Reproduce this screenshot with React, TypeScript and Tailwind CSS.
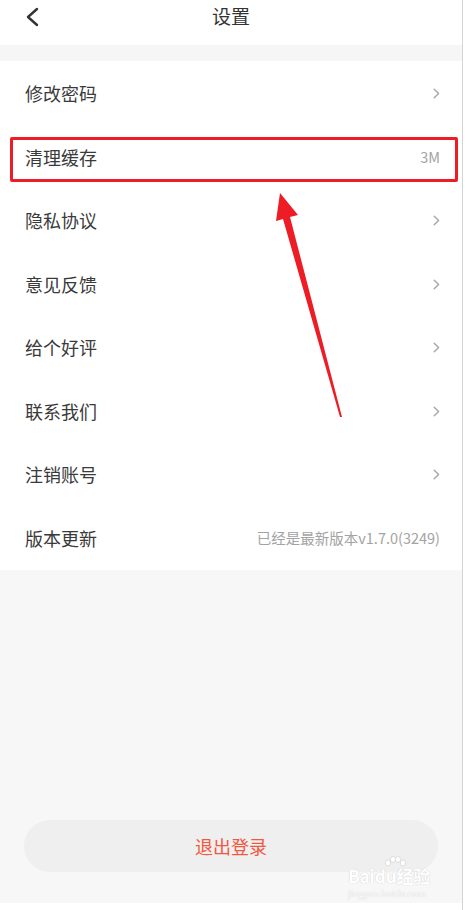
import React from 'react';

const rows: { label: string; value?: string }[] = [
  { label: '修改密码' },
  { label: '清理缓存', value: '3M' },
  { label: '隐私协议' },
  { label: '意见反馈' },
  { label: '给个好评' },
  { label: '联系我们' },
  { label: '注销账号' },
  { label: '版本更新', value: '已经是最新版本v1.7.0(3249)' },
];

const Chevron = () => (
  <svg width="7" height="11" viewBox="0 0 7 11" fill="none">
    <path d="M1.2 1.2 L5.6 5.5 L1.2 9.8" stroke="#a6a6a6" strokeWidth="1.4" strokeLinecap="round" strokeLinejoin="round" />
  </svg>
);

export default function App() {
  return (
    <div className="relative flex h-[910px] w-[465px] bg-white font-['Noto_Sans_CJK_SC','Noto_Sans',sans-serif]">
      <div className="flex w-[463px] flex-col border-r border-[#d4d4d4]">
        {/* Header */}
        <div className="relative flex h-[45px] items-center justify-center bg-white">
          <svg className="absolute left-[25px] top-[7px]" width="14" height="20" viewBox="0 0 14 20" fill="none">
            <path d="M12 2 L3 10 L12 18" stroke="#333" strokeWidth="2.4" strokeLinecap="round" strokeLinejoin="round" />
          </svg>
          <span className="-mt-[13px] text-[19px] text-[#333]">设置</span>
        </div>
        <div className="h-[16px] bg-[#f6f6f6]" />

        {/* List */}
        <div className="flex flex-col bg-white pt-[1px]">
          {rows.map((row) => (
            <div key={row.label} className="flex h-[63.5px] items-center justify-between pl-[25px] pr-[22px]">
              <span className="text-[18px] text-[#3a3a3a]">{row.label}</span>
              {row.value ? (
                <span className="text-[14.5px] text-[#a3a3a3]">{row.value}</span>
              ) : (
                <Chevron />
              )}
            </div>
          ))}
        </div>

        {/* Bottom */}
        <div className="flex flex-1 flex-col bg-[#f7f7f7] px-[24px] pt-[250px]">
          <button className="flex h-[52px] items-center justify-center rounded-full bg-[#efefef] text-[18px] text-[#f2573f]">
            退出登录
          </button>
        </div>
        <div className="h-[7px] bg-white" />
      </div>

      {/* Annotation: red box */}
      <div className="absolute left-[10px] top-[137px] h-[45px] w-[448px] rounded-[2px] border-[3px] border-[#ee1c25]" />

      {/* Annotation: arrow */}
      <svg className="absolute left-0 top-0" width="465" height="910" viewBox="0 0 465 910">
        <polygon points="280,193 298,215 290,217 342,417 340,417 283,219 276,221" fill="#ee1c25" />
      </svg>

      {/* Watermark */}
      <svg className="absolute left-[383px] top-[856px]" width="24" height="16" viewBox="0 0 24 16">
        <g fill="#ffffff" stroke="#d6d6d6" strokeWidth="0.8">
          <ellipse cx="5" cy="7" rx="2.6" ry="3" />
          <ellipse cx="10" cy="3.5" rx="2.6" ry="3" />
          <ellipse cx="15" cy="3.5" rx="2.6" ry="3" />
          <ellipse cx="20" cy="7" rx="2.6" ry="3" />
        </g>
      </svg>
      <span className="absolute left-[348px] top-[866px] text-[17px] font-bold leading-[20px] text-white [text-shadow:0_0_1px_#bdbdbd]">
        Baidu经验
      </span>
      <span className="absolute left-[348px] top-[889px] text-[9px] leading-[10px] text-white [text-shadow:0_0_1px_#bdbdbd]">
        jingyan.baidu.com
      </span>
    </div>
  );
}
